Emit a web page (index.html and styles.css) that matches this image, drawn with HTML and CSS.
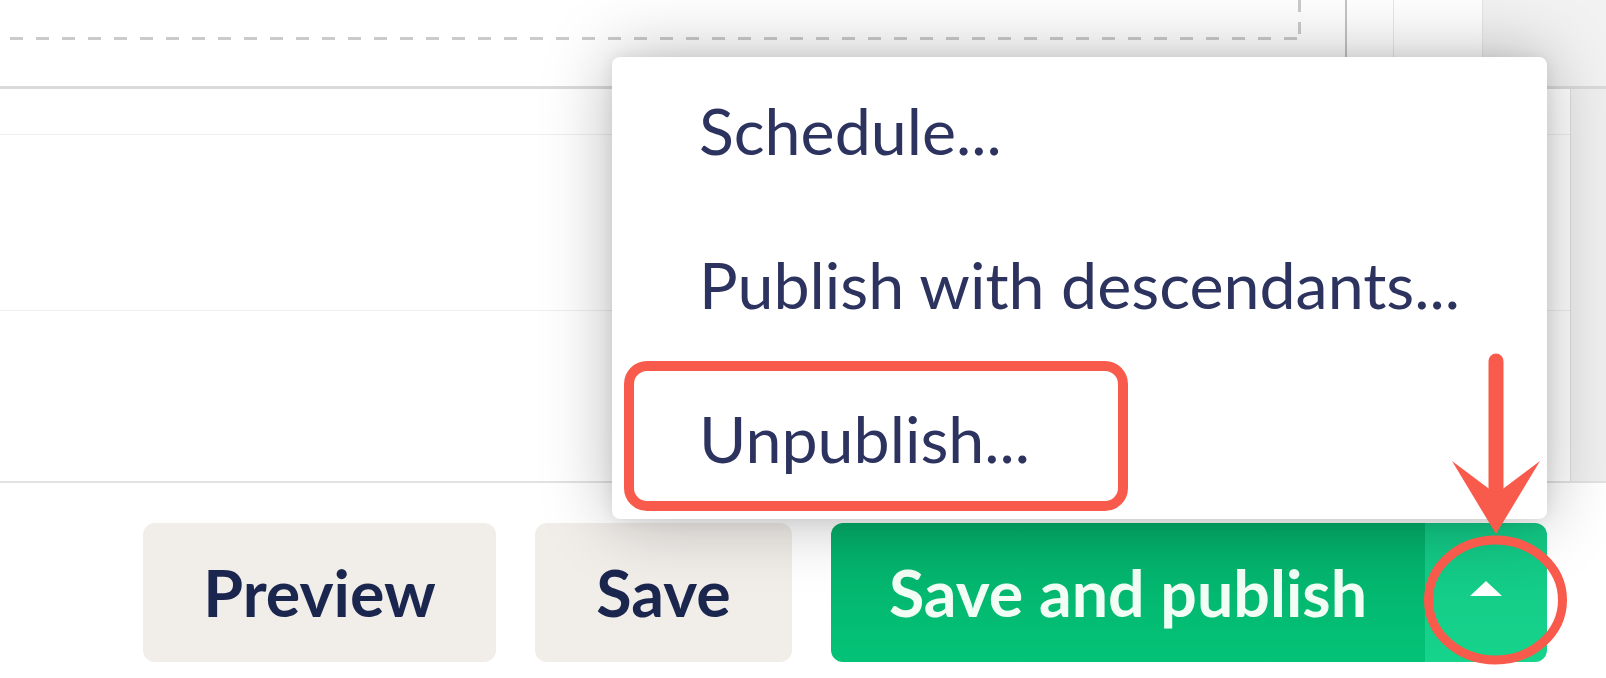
FILE: index.html
```html
<!doctype html>
<html lang="en">
<head>
    <meta charset="UTF-8">
    <link rel="stylesheet" href="styles.css">
    <title>Content editor - publish options</title>
</head>
<body>
    <div class="screen">

        <div class="top-row">
            <div class="dropzone"></div>
            <div class="top-tabs">
                <span class="tab"></span>
                <span class="tab tab-light"></span>
                <span class="tab tab-rail"></span>
            </div>
        </div>

        <div class="fields">
            <div class="field-col">
                <div class="field field-short"></div>
                <div class="field field-tall"></div>
                <div class="field field-rest"></div>
            </div>
            <div class="rail"></div>
        </div>

        <!-- Editor footer buttons -->
        <div class="actions">
            <button class="btn btn-preview">Preview</button>
            <button class="btn btn-save">Save</button>
            <div class="publish-group">
                <button class="btn btn-publish">Save and publish</button>
                <button class="btn btn-caret"><span class="caret"></span></button>
            </div>
        </div>

        <!-- Publish options menu (open) -->
        <ul class="dropdown-menu">
            <li>Schedule...</li>
            <li>Publish with descendants...</li>
            <li>Unpublish...</li>
        </ul>

        <!-- Screenshot annotations -->
        <svg class="annotations" width="1606" height="678" viewBox="0 0 1606 678">
            <rect x="629" y="366" width="494" height="140" rx="18" fill="none" stroke="#f85a4c" stroke-width="10"/>
            <line x1="1496" y1="361" x2="1496" y2="500" stroke="#f85a4c" stroke-width="15" stroke-linecap="round"/>
            <polygon points="1452,461 1496,534 1540,461 1496,494" fill="#f85a4c"/>
            <ellipse cx="1495.5" cy="600" rx="67" ry="60" fill="none" stroke="#f85a4c" stroke-width="9"/>
        </svg>

    </div>
</body>
</html>
```

FILE: styles.css
```css
* {
    box-sizing: border-box;
}

body {
    margin: 0;
    background-color: #ffffff;
    font-family: Lato, "Open Sans", sans-serif;
}

.screen {
    position: relative;
    width: 1606px;
    height: 678px;
    overflow: hidden;
    background-color: #ffffff;
}

/* top strip: dashed drop zone + side tabs */
.top-row {
    display: flex;
    height: 86px;
}

.dropzone {
    flex: 0 0 1301px;
    height: 40px;
    background:
        repeating-linear-gradient(90deg, #cbcbcb 0 13px, transparent 13px 26px) 10px 100% / 1288px 3px no-repeat,
        repeating-linear-gradient(180deg, #cbcbcb 0 12px, transparent 12px 22px) 100% 0 / 3px 40px no-repeat;
}

.top-tabs {
    flex: 1;
    display: flex;
    margin-left: 44px;
}

.tab {
    width: 48px;
    border-left: 2px solid #c4c4c4;
}

.tab-light {
    width: 89px;
    border-left: 1px solid #e8e8e8;
}

.tab-rail {
    flex: 1;
    border-left: 1px solid #e6e6e6;
    background-color: #f2f2f2;
}

/* property rows */
.fields {
    display: flex;
    height: 397px;
    border-top: 3px solid #dadada;
    border-bottom: 2px solid #e2e2e2;
}

.field-col {
    flex: 1;
    display: flex;
    flex-direction: column;
}

.field {
    border-bottom: 1px solid #eeeeee;
}

.field-short {
    height: 46px;
}

.field-tall {
    height: 176px;
}

.field-rest {
    flex: 1;
    border-bottom: none;
}

.rail {
    width: 36px;
    background-color: #efefef;
    border-left: 1px solid #dcdcdc;
}

/* footer buttons */
.actions {
    display: flex;
    justify-content: flex-end;
    gap: 39px;
    padding: 40px 59px 0 0;
}

.btn {
    height: 139px;
    padding: 0;
    border: none;
    border-radius: 12px;
    background-color: #f1ede9;
    color: #1b264f;
    font-family: Lato, "Open Sans", sans-serif;
    font-size: 64.5px;
    font-weight: 700;
    line-height: 139px;
    text-align: center;
    cursor: pointer;
}

.btn-preview {
    width: 353px;
}

.btn-save {
    width: 257px;
}

.publish-group {
    display: flex;
    border-radius: 12px;
    overflow: hidden;
}

.btn-publish {
    width: 594px;
    border-radius: 0;
    background: linear-gradient(#04ad69, #03c377);
    color: #f1fdf5;
}

.btn-caret {
    width: 122px;
    border-radius: 0;
    background: linear-gradient(#12c684, #16d48c);
    display: flex;
    align-items: center;
    justify-content: center;
}

.caret {
    width: 0;
    height: 0;
    margin-top: -8px;
    border-left: 16px solid transparent;
    border-right: 16px solid transparent;
    border-bottom: 15px solid #ffffff;
}

/* open dropdown */
.dropdown-menu {
    position: absolute;
    left: 612px;
    top: 57px;
    z-index: 2;
    width: 935px;
    margin: 0;
    padding: 0;
    list-style: none;
    background-color: #ffffff;
    border-radius: 8px;
    box-shadow: 0 0 70px rgba(0, 0, 0, 0.28), 0 0 16px rgba(0, 0, 0, 0.08);
}

.dropdown-menu li {
    height: 154px;
    padding: 0 0 8px 87px;
    font-size: 64.5px;
    line-height: 146px;
    color: #2d335f;
    white-space: nowrap;
}

.annotations {
    position: absolute;
    left: 0;
    top: 0;
    z-index: 3;
    pointer-events: none;
}
```
